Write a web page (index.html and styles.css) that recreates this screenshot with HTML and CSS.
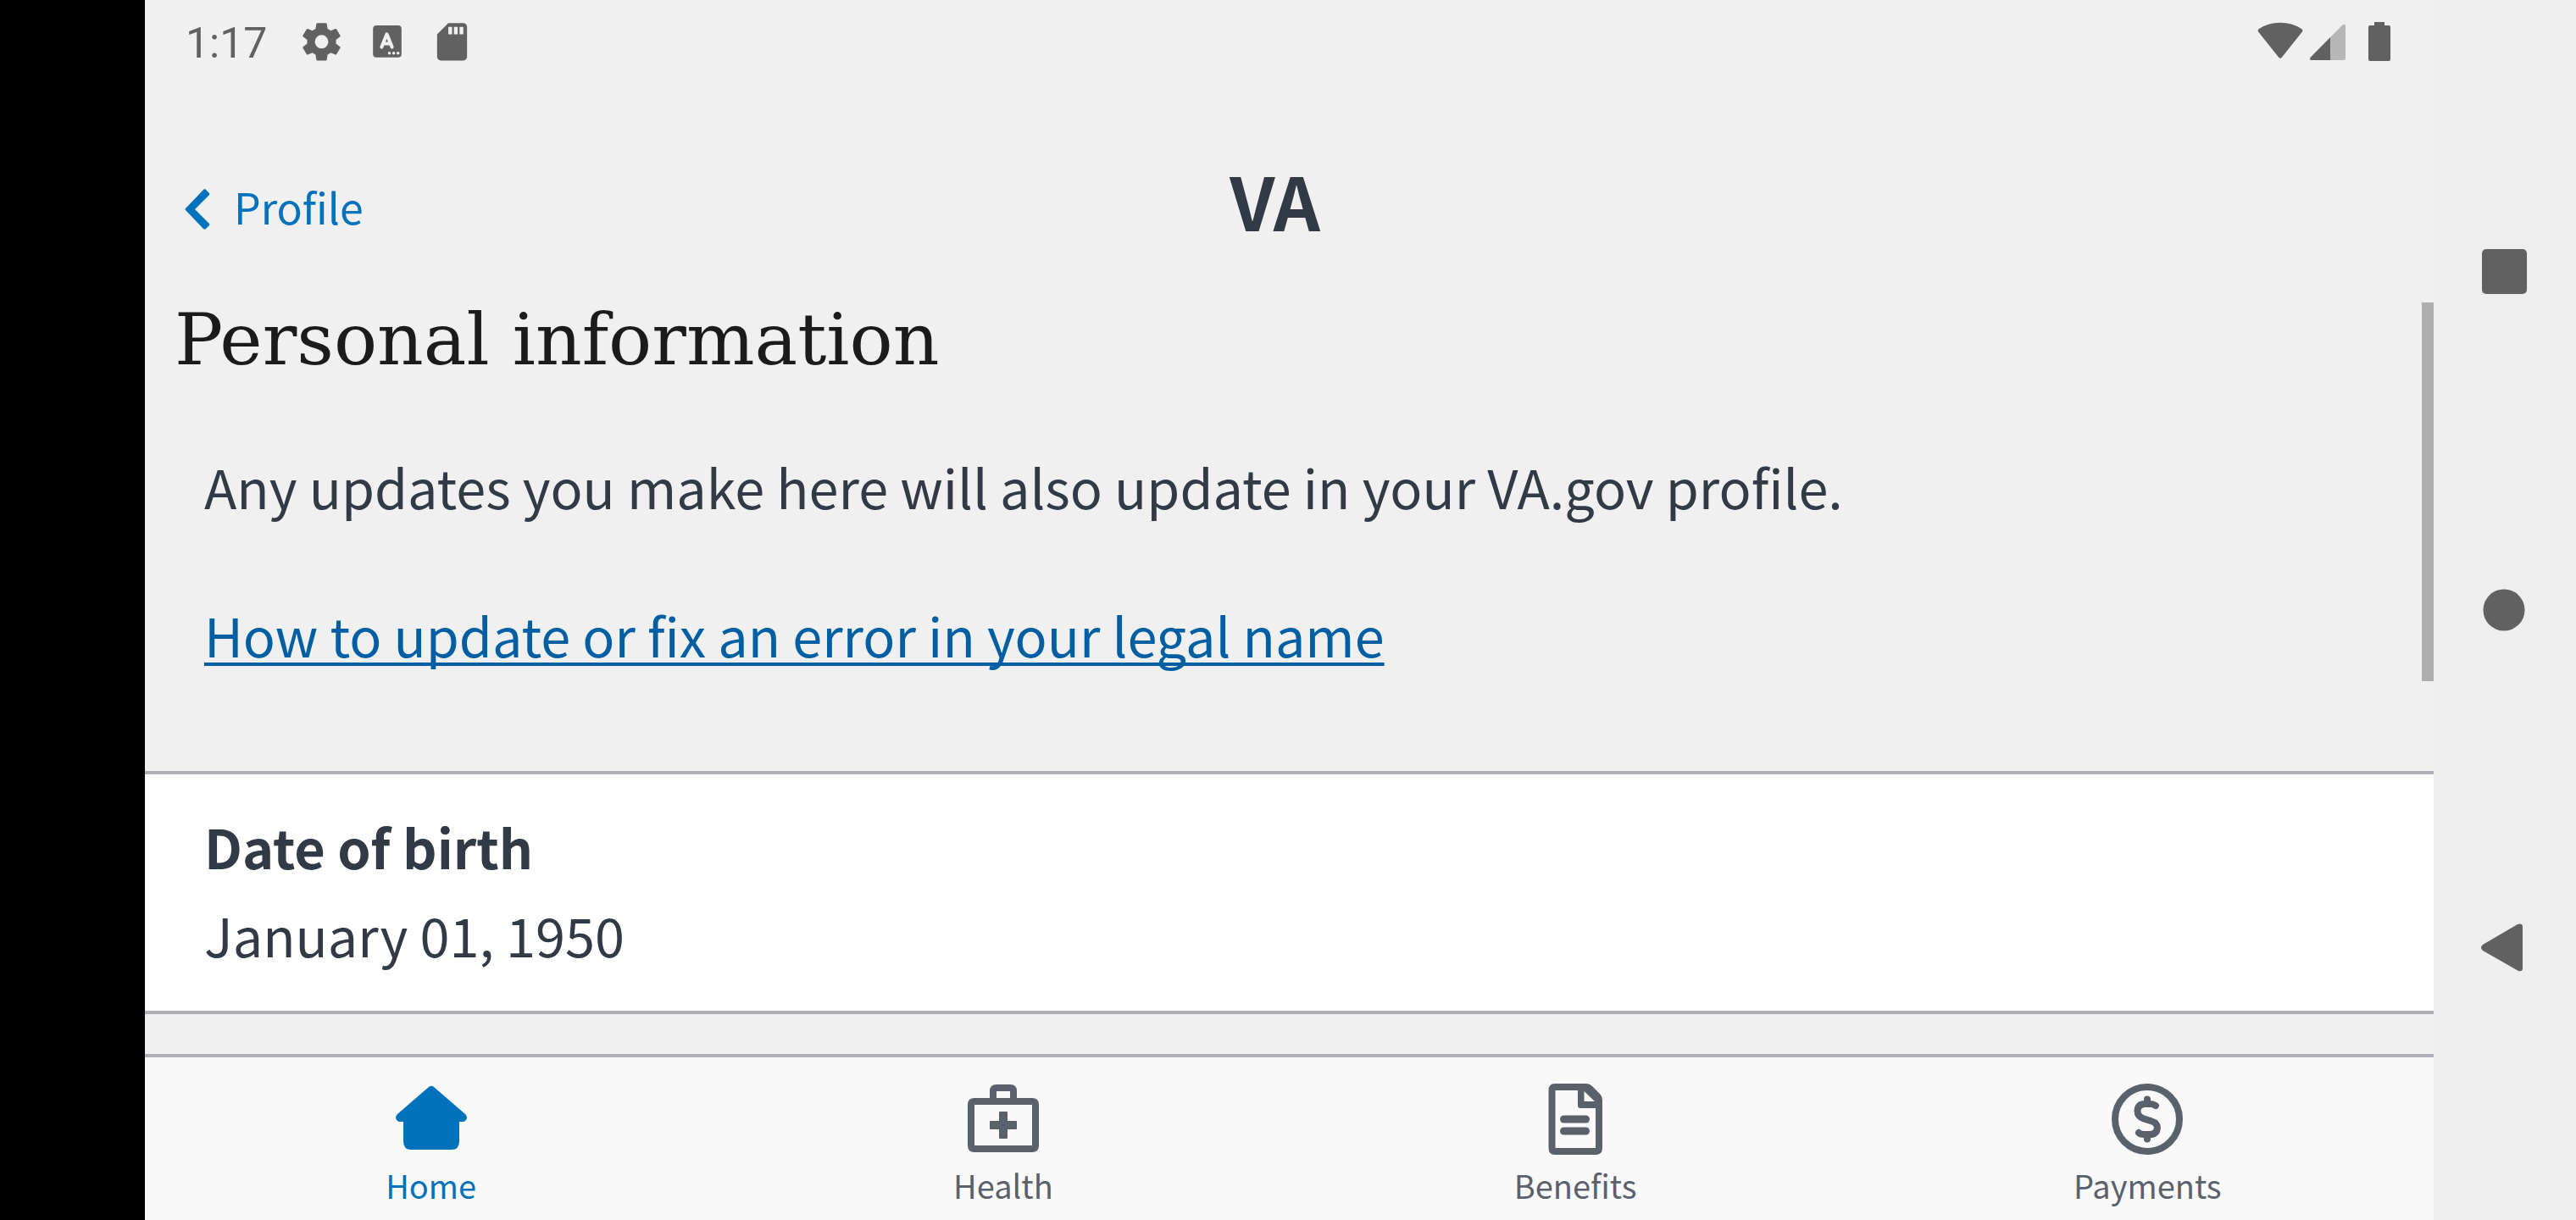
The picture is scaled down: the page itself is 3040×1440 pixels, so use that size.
FILE: index.html
```html
<!DOCTYPE html>
<html lang="en">
<head>
<meta charset="utf-8">
<meta name="viewport" content="width=device-width, initial-scale=1">
<title>Personal information</title>
<link rel="stylesheet" href="styles.css">
</head>
<body>
<div class="device">
  <div class="app">
    <div class="status">
      <div class="status-left">
        <span class="time">1:17</span>
        <svg class="status-icon" viewBox="0 1 24 24" aria-hidden="true"><path fill-rule="evenodd" d="M9.700 2h4.600q.4 0 .5.4l.4 2.700q.9.4 1.700 1l2.500-1q.4-.2.600.2l2 3.400q.2.4-.1.600l-2.200 1.700v2l2.200 1.700q.3.2.1.600l-2 3.400q-.2.4-.600.2l-2.500-1q-.8.600-1.700 1l-.4 2.700q-.1.400-.5.400H9.700q-.4 0-.5-.4l-.4-2.700q-.9-.4-1.700-1l-2.500 1q-.4.2-.600-.2l-2-3.400q-.2-.4.100-.600L4.300 13V11L2.100 9.300q-.3-.2-.1-.6l2-3.400q.2-.4.600-.2l2.500 1q.8-.6 1.700-1l.4-2.700q.1-.4.500-.4zM12 8.400a3.600 3.600 0 1 0 0 7.200a3.600 3.600 0 1 0 0-7.200z"/></svg>
        <svg class="status-icon" viewBox="0 0 52 52" aria-hidden="true"><rect x="10" y="5" width="33" height="37" rx="4"/><path class="cut" d="M20 30l6-15l6 15M22 26h8"/><g class="cut-fill"><circle cx="29" cy="37" r="1.700"/><circle cx="34" cy="37" r="1.700"/><circle cx="39" cy="37" r="1.700"/></g></svg>
        <svg class="status-icon" viewBox="0 1 24 24" aria-hidden="true"><path fill-rule="evenodd" d="M18 2h-8L4 8v12c0 1.100.9 2 2 2h12c1.100 0 2-.9 2-2V4c0-1.100-.9-2-2-2zM10 4v4h2V4zM13 4v4h2V4zM16 4v4h2V4z"/></svg>
      </div>
      <div class="status-right">
        <svg width="54" height="50" viewBox="0 0 54 50" aria-hidden="true"><path d="M1.500 12Q-.5 9.500 2 8Q13 .8 27 .8T52 8Q54.500 9.500 52.500 12L29 41.500Q27 44 25 41.500z"/></svg>
        <svg width="42" height="50" viewBox="0 0 42 50" aria-hidden="true"><path opacity=".4" d="M24 18L38 4Q42 1 42 5V43Q42 45 40 45H24z"/><path d="M24 18V45H2Q-1.500 45 .8 41.500z"/></svg>
        <svg class="battery" width="26" height="50" viewBox="0 0 26 50" aria-hidden="true"><path d="M7 0H19V4H24Q26 4 26 6V44Q26 46 24 46H2Q0 46 0 44V6Q0 4 2 4H7z"/></svg>
      </div>
    </div>

    <header class="header">
      <button class="back" type="button">
        <svg width="30" height="56" viewBox="0 -8 30 56" aria-hidden="true"><path d="M24 0L29 5Q29.500 6 29 7L12 24L29 41Q29.500 42 29 43L25 47Q24 48 22 47L1 25Q0 24 1 23L22 1Q23 0 24 0z"/></svg>
        Profile
      </button>
      <span class="logo">VA</span>
    </header>

    <main class="content">
      <h1 class="title">Personal information</h1>
      <p class="note">Any updates you make here will also update in your VA.gov profile.</p>
      <a class="help" href="#legal-name">How to update or fix an error in your legal name</a>
      <section class="card">
        <h2 class="card-label">Date of birth</h2>
        <p class="card-value">January 01, 1950</p>
      </section>
      <div class="scrollbar"></div>
    </main>

    <nav class="tabs">
      <a class="tab tab-active" href="#home">
        <svg class="tab-icon" viewBox="0 0 84 84" aria-hidden="true"><path d="M39 4Q42 1.500 45 4L82 36Q85 39 83.500 42Q82 45 79 45H75V68Q75 78 66 78H18Q9 78 9 68V45H5Q2 45 .5 42Q-1 39 2 36z"/></svg>
        Home
      </a>
      <a class="tab" href="#health">
        <svg class="tab-icon" viewBox="0 0 84 84" aria-hidden="true"><path fill-rule="evenodd" d="M26 17V9Q26 1 34 1H50Q58 1 58 9V17H76Q84 17 84 25V73Q84 81 76 81H8Q0 81 0 73V25Q0 17 8 17zM34 9V17H50V9zM8 25V73H76V25z"/><path d="M38 33H46Q47 33 47 34V44H57Q58 44 58 45V53Q58 54 57 54H47V64Q47 65 46 65H38Q37 65 37 64V54H27Q26 54 26 53V45Q26 44 27 44H37V34Q37 33 38 33z"/></svg>
        Health
      </a>
      <a class="tab" href="#benefits">
        <svg class="tab-icon" viewBox="0 0 84 84" aria-hidden="true"><path fill-rule="evenodd" d="M18 0H55Q59 0 62 3L71 12Q74 15 74 19V76Q74 84 66 84H18Q10.500 84 10.500 76V8Q10.500 0 18 0zM18.500 8V76H66V29H48Q45 29 45 26V8zM52.500 9V21H65z"/><rect x="24" y="37.500" width="35" height="9" rx="4.500"/><rect x="24" y="51.500" width="35" height="9" rx="4.500"/></svg>
        Benefits
      </a>
      <a class="tab" href="#payments">
        <svg class="tab-icon tab-icon-line" viewBox="0 0 84 84" aria-hidden="true"><circle cx="42" cy="42" r="38"/><path d="M42 18.500V24M42 60V65.500M52 26Q49 24 45 24H39Q30.500 24.500 30.500 32.500Q30.500 39 38 41.500L46 44Q54 46.500 54 52Q53.500 60 45 60H38Q34 60 32 58"/></svg>
        Payments
      </a>
    </nav>
  </div>

  <div class="system-nav">
    <button class="system-button" type="button" aria-label="Overview"><svg width="80" height="80" viewBox="0 0 80 80" aria-hidden="true"><rect x="13" y="13" width="53" height="53" rx="5"/></svg></button>
    <button class="system-button" type="button" aria-label="Home"><svg width="80" height="80" viewBox="0 0 80 80" aria-hidden="true"><circle cx="39" cy="40" r="24.500"/></svg></button>
    <button class="system-button" type="button" aria-label="Back"><svg width="80" height="80" viewBox="0 0 80 80" aria-hidden="true"><path d="M14 36L55 12Q61 10 61 15V64Q61 68 56 67L14 43Q10 39.500 14 36z"/></svg></button>
  </div>
</div>
</body>
</html>
```
FILE: styles.css
```css
* {
  box-sizing: border-box;
}

body,
h1,
h2,
p {
  margin: 0;
}

body {
  background: #f0f0f0;
  color: #323a45;
  font-family: "Noto Sans CJK SC", "Noto Sans", sans-serif;
  font-size: 63px;
  line-height: 98px;
}

svg {
  display: block;
  flex: none;
  fill: currentColor;
}

button {
  padding: 0;
  border: 0;
  background: none;
  color: inherit;
  font: inherit;
}

.device {
  display: grid;
  grid-template-columns: minmax(0, 1fr) 168px;
  min-height: 100vh;
  border-left: 171px solid #000;
}

.app {
  display: flex;
  flex-direction: column;
}

/* System status bar */
.status {
  display: flex;
  justify-content: space-between;
  align-items: center;
  height: 102px;
  padding: 0 51px 0 48px;
  color: #616161;
}

.status-left,
.status-right {
  display: flex;
  align-items: center;
}

.status-left {
  gap: 24px;
}

.status-right {
  gap: 8px;
}

.time {
  margin-right: 14px;
  font-family: Roboto, sans-serif;
  font-size: 50px;
  line-height: 56px;
}

.status-icon {
  width: 53px;
  height: 53px;
}

.cut {
  fill: none;
  stroke: #f0f0f0;
  stroke-width: 4;
  stroke-linecap: round;
  stroke-linejoin: round;
}

.cut-fill {
  fill: #f0f0f0;
}

.battery {
  margin-left: 19px;
}

/* Screen header */
.header {
  display: grid;
  grid-template-columns: 1fr auto 1fr;
  align-items: end;
  padding: 90px 34px 77px 0;
}

.back {
  display: flex;
  justify-self: start;
  align-items: center;
  gap: 28px;
  padding-left: 47px;
  color: #0071bb;
  font-size: 50px;
  line-height: 74px;
}

.logo {
  font-size: 86px;
  font-weight: 700;
  line-height: 88px;
}

.content {
  position: relative;
  flex: 1;
}

.title {
  padding-left: 35px;
  color: #1b1b1b;
  font-family: "DejaVu Serif", serif;
  font-size: 85px;
  font-weight: 400;
  line-height: 88px;
}

.note {
  padding: 0 70px;
  margin: 80px 0 77px;
}

.help {
  display: block;
  margin: 0 70px 112px;
  color: #005ea2;
  text-decoration-thickness: 4px;
  text-decoration-skip-ink: none;
  text-underline-offset: 6px;
}

.card {
  padding: 33px 70px 38px;
  border: solid #aeb0b5;
  border-width: 4px 0;
  background: #fff;
  line-height: 104px;
}

.card-label {
  font-size: 63px;
  font-weight: 700;
}

.scrollbar {
  position: absolute;
  top: 0;
  right: 0;
  width: 14px;
  height: 447px;
  background: #aeaeae;
}

/* Bottom tabs */
.tabs {
  display: grid;
  grid-template-columns: repeat(4, 1fr);
  border-top: 4px solid #aeb0b5;
  background: #f9f9f9;
}

.tab {
  display: flex;
  flex-direction: column;
  align-items: center;
  gap: 8px;
  padding: 31px 0 13px;
  color: #5b616b;
  font-size: 38px;
  line-height: 56px;
  text-decoration: none;
}

.tab-active {
  color: #0071bb;
}

.tab-icon {
  width: 84px;
  height: 84px;
}

.tab-icon-line {
  fill: none;
  stroke: currentColor;
  stroke-width: 8;
  stroke-linecap: round;
}

/* System navigation */
.system-nav {
  display: grid;
  grid-template-rows: repeat(3, 1fr);
  place-items: center;
  padding: 122px 0;
  background: #eee;
  color: #616161;
}
```
